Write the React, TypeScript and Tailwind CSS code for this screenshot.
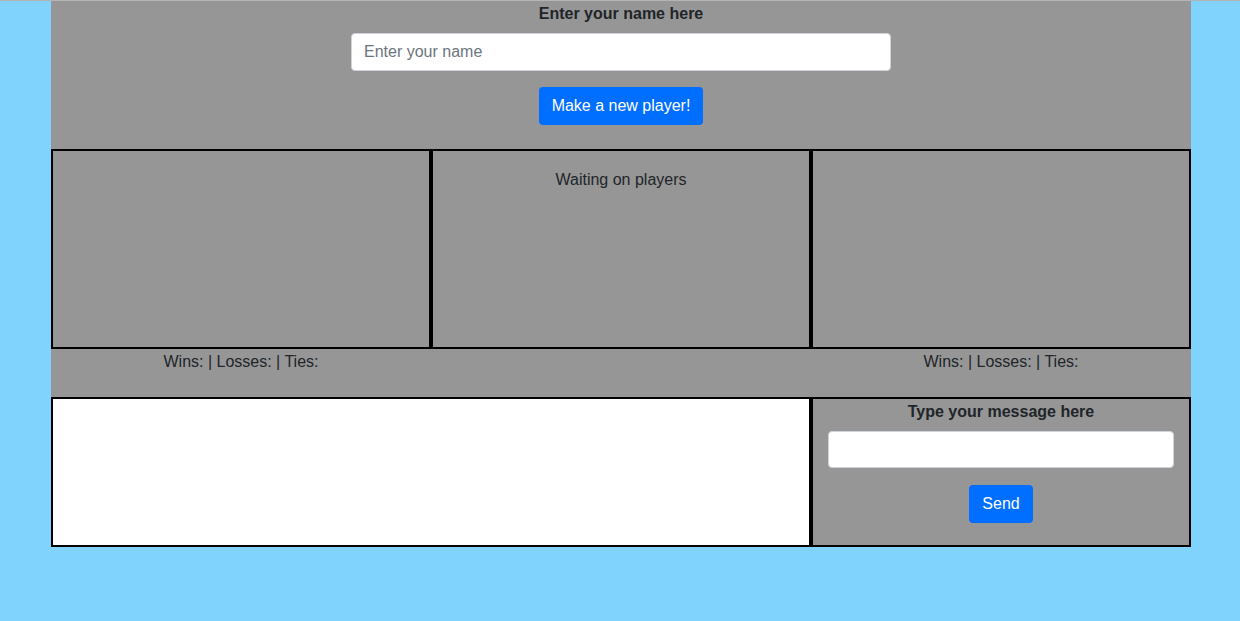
export default function App() {
  const font = { fontFamily: '"Liberation Sans", Arial, sans-serif' };
  return (
    <div className="min-h-[621px] bg-[#7fd3fd] border-t border-[#b4b4b4] text-[#212529]" style={font}>
      <div className="ml-[51px] w-[1140px] bg-[#969696]">
        <div className="flex flex-col items-center pt-[3px] pb-[24px]">
          <div className="text-[16px] font-bold leading-[20px]">Enter your name here</div>
          <input
            className="mt-[9px] h-[38px] w-[540px] rounded-[4px] border border-[#ced4da] bg-white px-[12px] text-[16px] text-[#495057] placeholder:text-[#6c757d] outline-none"
            placeholder="Enter your name"
          />
          <button className="mt-[16px] h-[38px] rounded-[4px] bg-[#006eff] px-[13px] text-[16px] text-white">
            Make a new player!
          </button>
        </div>
        <div className="grid grid-cols-3 h-[200px]">
          <div className="border-2 border-black"></div>
          <div className="border-2 border-black flex justify-center pt-[19px] text-[16px] leading-[20px]">Waiting on players</div>
          <div className="border-2 border-black"></div>
        </div>
        <div className="grid grid-cols-3 h-[48px] text-[16px] leading-[20px]">
          <div className="text-center pt-[3px]">Wins: | Losses: | Ties:</div>
          <div></div>
          <div className="text-center pt-[3px]">Wins: | Losses: | Ties:</div>
        </div>
        <div className="grid grid-cols-3 h-[150px]">
          <div className="col-span-2 border-2 border-black bg-white"></div>
          <div className="border-2 border-black flex flex-col items-center pt-[3px]">
            <div className="text-[16px] font-bold leading-[20px]">Type your message here</div>
            <input className="mt-[9px] h-[37px] w-[346px] rounded-[4px] border border-[#ced4da] bg-white px-[12px] outline-none" />
            <button className="mt-[17px] h-[38px] rounded-[4px] bg-[#006eff] px-[13px] text-[16px] text-white">Send</button>
          </div>
        </div>
      </div>
    </div>
  );
}
